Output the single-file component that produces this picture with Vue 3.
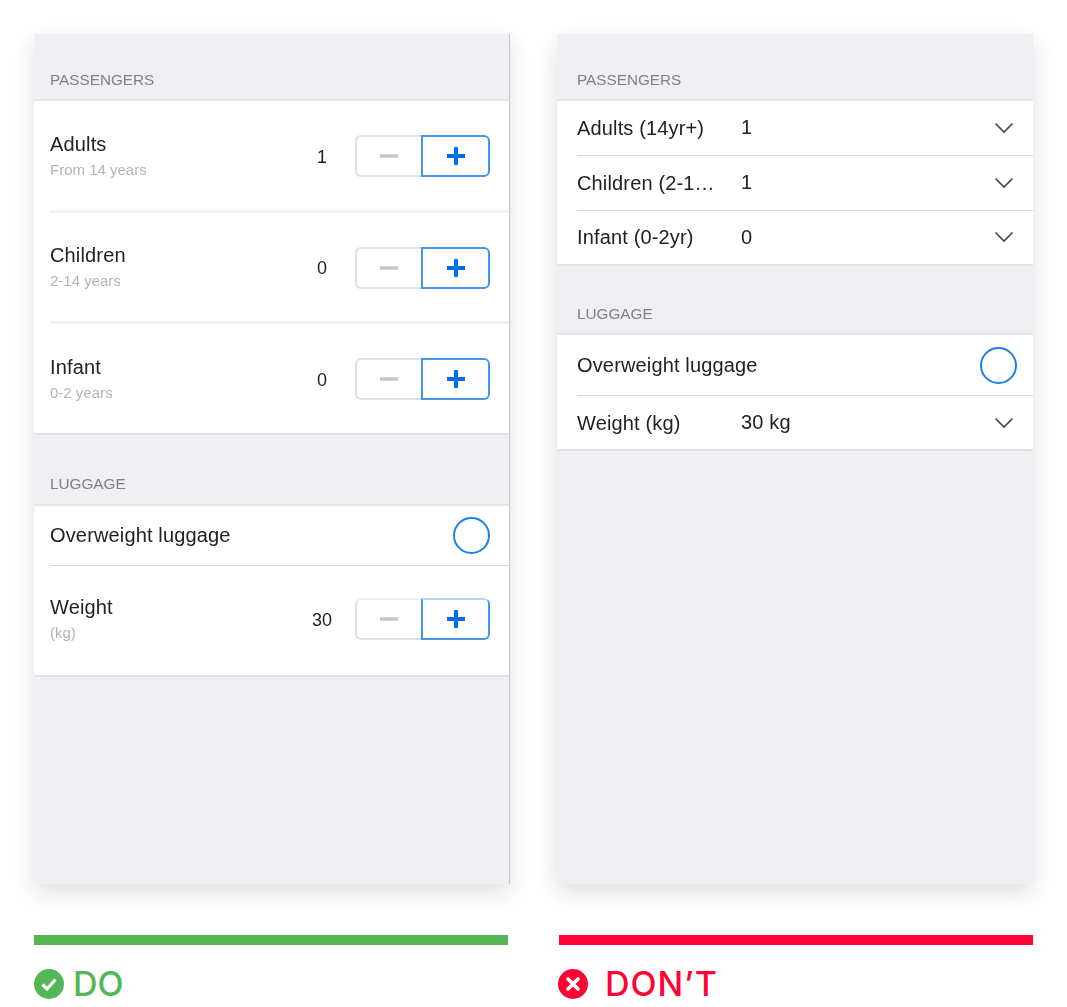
<script setup>
const steppers = [
  { name: 'Adults', hint: 'From 14 years', value: 1 },
  { name: 'Children', hint: '2-14 years', value: 0 },
  { name: 'Infant', hint: '0-2 years', value: 0 }
];

const selects = [
  { name: 'Adults (14yr+)', value: '1' },
  { name: 'Children (2-14yr)', value: '1' },
  { name: 'Infant (0-2yr)', value: '0' }
];
</script>

<template>
  <div class="page">
    <section class="panel panel--do">
      <h2 class="heading">PASSENGERS</h2>
      <div class="group">
        <div v-for="row in steppers" :key="row.name" class="tall-row">
          <div class="tall-row__text">
            <div class="name">{{ row.name }}</div>
            <div class="hint">{{ row.hint }}</div>
          </div>
          <span class="count">{{ row.value }}</span>
          <div class="stepper">
            <button type="button" class="stepper__minus"><svg width="18" height="4"><path d="M0 2H18" /></svg></button>
            <button type="button" class="stepper__plus"><svg width="20" height="20" viewBox="0 0 20 20"><path d="M10 1V19M1 10H19" /></svg></button>
          </div>
        </div>
      </div>
      <h2 class="heading heading--next">LUGGAGE</h2>
      <div class="group">
        <div class="toggle-row">
          <span class="name">Overweight luggage</span>
          <span class="radio"></span>
        </div>
        <div class="tall-row tall-row--last">
          <div class="tall-row__text">
            <div class="name">Weight</div>
            <div class="hint">(kg)</div>
          </div>
          <span class="count">30</span>
          <div class="stepper stepper--faded">
            <button type="button" class="stepper__minus"><svg width="18" height="4"><path d="M0 2H18" /></svg></button>
            <button type="button" class="stepper__plus"><svg width="20" height="20" viewBox="0 0 20 20"><path d="M10 1V19M1 10H19" /></svg></button>
          </div>
        </div>
      </div>
    </section>

    <section class="panel panel--dont">
      <h2 class="heading">PASSENGERS</h2>
      <div class="group">
        <div v-for="row in selects" :key="row.name" class="select-row">
          <span class="name name--clip">{{ row.name }}</span>
          <span class="select-row__value">{{ row.value }}</span>
          <svg class="chevron" width="20" height="12" viewBox="0 0 20 12"><path d="M1.5 1.5L10 10L18.5 1.5" /></svg>
        </div>
      </div>
      <h2 class="heading heading--next">LUGGAGE</h2>
      <div class="group">
        <div class="toggle-row">
          <span class="name">Overweight luggage</span>
          <span class="radio"></span>
        </div>
        <div class="select-row">
          <span class="name name--clip">Weight (kg)</span>
          <span class="select-row__value">30 kg</span>
          <svg class="chevron" width="20" height="12" viewBox="0 0 20 12"><path d="M1.5 1.5L10 10L18.5 1.5" /></svg>
        </div>
      </div>
    </section>

    <div class="verdict verdict--do">
      <div class="verdict__bar"></div>
      <div class="verdict__label">
        <svg width="30" height="30" viewBox="0 0 30 30"><circle cx="15" cy="15" r="15" fill="#53b757" /><path d="M8.5 15.5L13 20L21.5 10.5" fill="none" stroke="#fff" stroke-width="3.2" /></svg>
        <span>DO</span>
      </div>
    </div>

    <div class="verdict verdict--dont">
      <div class="verdict__bar"></div>
      <div class="verdict__label">
        <svg width="30" height="30" viewBox="0 0 30 30"><circle cx="15" cy="15" r="15" fill="#ff0335" /><path d="M10 10L20 20M20 10L10 20" fill="none" stroke="#fff" stroke-width="3.6" stroke-linecap="round" /></svg>
        <span>DON’T</span>
      </div>
    </div>
  </div>
</template>

<style>
body {
  background: #fff;
}
</style>

<style scoped>
.page {
  display: grid;
  grid-template-columns: 476px 476px;
  column-gap: 47px;
  row-gap: 51px;
  padding: 34px 0 0 34px;
  font-family: "Liberation Sans", Arial, sans-serif;
  color: #222;
}

/* the reference is a soft, upscaled image */
.panel {
  height: 850px;
  box-sizing: border-box;
  background: #efeff4;
  box-shadow: 0 8px 22px rgba(0, 0, 0, 0.13);
  filter: blur(0.4px);
}

.panel--do {
  border-right: 1px solid #c4c4c8;
}

.heading {
  margin: 0;
  padding: 37px 16px 10px;
  font-size: 15.3px;
  font-weight: 400;
  line-height: 18px;
  color: #7f7f84;
}

.panel--dont .heading {
  padding-left: 20px;
}

.heading--next {
  padding-top: 40px;
  padding-bottom: 11px;
}

.panel--dont .heading--next {
  padding-top: 39px;
  padding-bottom: 10px;
}

.group {
  background: #fff;
  border-top: 2px solid #e6e6ea;
  border-bottom: 2px solid #e2e2e6;
}

.name {
  font-size: 20px;
  letter-spacing: 0.15px;
  line-height: 24px;
  color: #222;
}

.hint {
  margin-top: 5px;
  font-size: 15px;
  line-height: 18px;
  color: #b4b4b8;
}

.tall-row {
  display: flex;
  align-items: center;
  height: 108.5px;
  padding: 0 19px 0 16px;
}

.tall-row + .tall-row {
  margin-left: 16px;
  padding-left: 0;
  border-top: 3px solid #f1f1f3;
}

.tall-row--last {
  height: 105.5px;
  padding-bottom: 4px;
}

.tall-row__text {
  flex: 1;
}

.count {
  width: 46px;
  margin: 4px 10px 0 0;
  font-size: 18px;
  text-align: center;
  color: #222;
}

.stepper {
  display: flex;
  height: 42px;
  margin-top: 2px;
}

.stepper button {
  display: flex;
  align-items: center;
  justify-content: center;
  padding: 0;
  background: #fff;
  cursor: pointer;
}

.stepper__minus {
  width: 66px;
  border: 2px solid #e0e0e2;
  border-right: 0;
  border-radius: 6px 0 0 6px;
}

.stepper__minus path {
  stroke: #c6c6c8;
  stroke-width: 3.5;
}

.stepper__plus {
  width: 69px;
  border: 2px solid #4796ec;
  border-radius: 0 6px 6px 0;
}

.stepper__plus path {
  stroke: #0070e6;
  stroke-width: 4;
}

.stepper--faded .stepper__minus {
  border-top-color: #efefef;
}

.stepper--faded .stepper__plus {
  border-top-color: #b4d6f8;
}

.toggle-row {
  display: flex;
  align-items: center;
  justify-content: space-between;
  height: 59px;
  padding: 0 19px 0 16px;
}

.panel--dont .toggle-row {
  height: 60px;
  padding-left: 20px;
  padding-right: 16px;
}

.radio {
  width: 37px;
  height: 37px;
  box-sizing: border-box;
  border: 2.5px solid #1c80e8;
  border-radius: 50%;
}

.toggle-row + .tall-row {
  margin-left: 16px;
  padding-left: 0;
  border-top: 1.5px solid #d6d6da;
}

.select-row {
  display: flex;
  align-items: center;
  height: 53.75px;
  margin-left: 20px;
  padding-right: 19px;
}

.select-row + .select-row,
.toggle-row + .select-row {
  border-top: 1.5px solid #d6d6da;
}

.toggle-row + .select-row {
  height: 52.5px;
}

.name--clip {
  flex: none;
  width: 144px;
  margin-right: 20px;
  overflow: hidden;
  white-space: nowrap;
  text-overflow: ellipsis;
}

.select-row__value {
  flex: 1;
  font-size: 20px;
  letter-spacing: 0.15px;
  color: #222;
}

.chevron path {
  fill: none;
  stroke: #444;
  stroke-width: 1.6;
}

.verdict__bar {
  height: 10px;
}

.verdict--do .verdict__bar {
  width: 474px;
  background: #53b757;
}

.verdict--dont .verdict__bar {
  margin-left: 2px;
  background: #ff0335;
}

.verdict__label {
  display: flex;
  align-items: center;
  gap: 9px;
  margin-top: 24px;
  font-family: Inter, "Liberation Sans", sans-serif;
  font-size: 34px;
  font-weight: 500;
  line-height: 30px;
}

.verdict--do .verdict__label {
  color: #53b757;
}

.verdict--dont .verdict__label {
  gap: 17px;
  margin-left: 1px;
  letter-spacing: 1px;
  color: #ff0335;
}
</style>
